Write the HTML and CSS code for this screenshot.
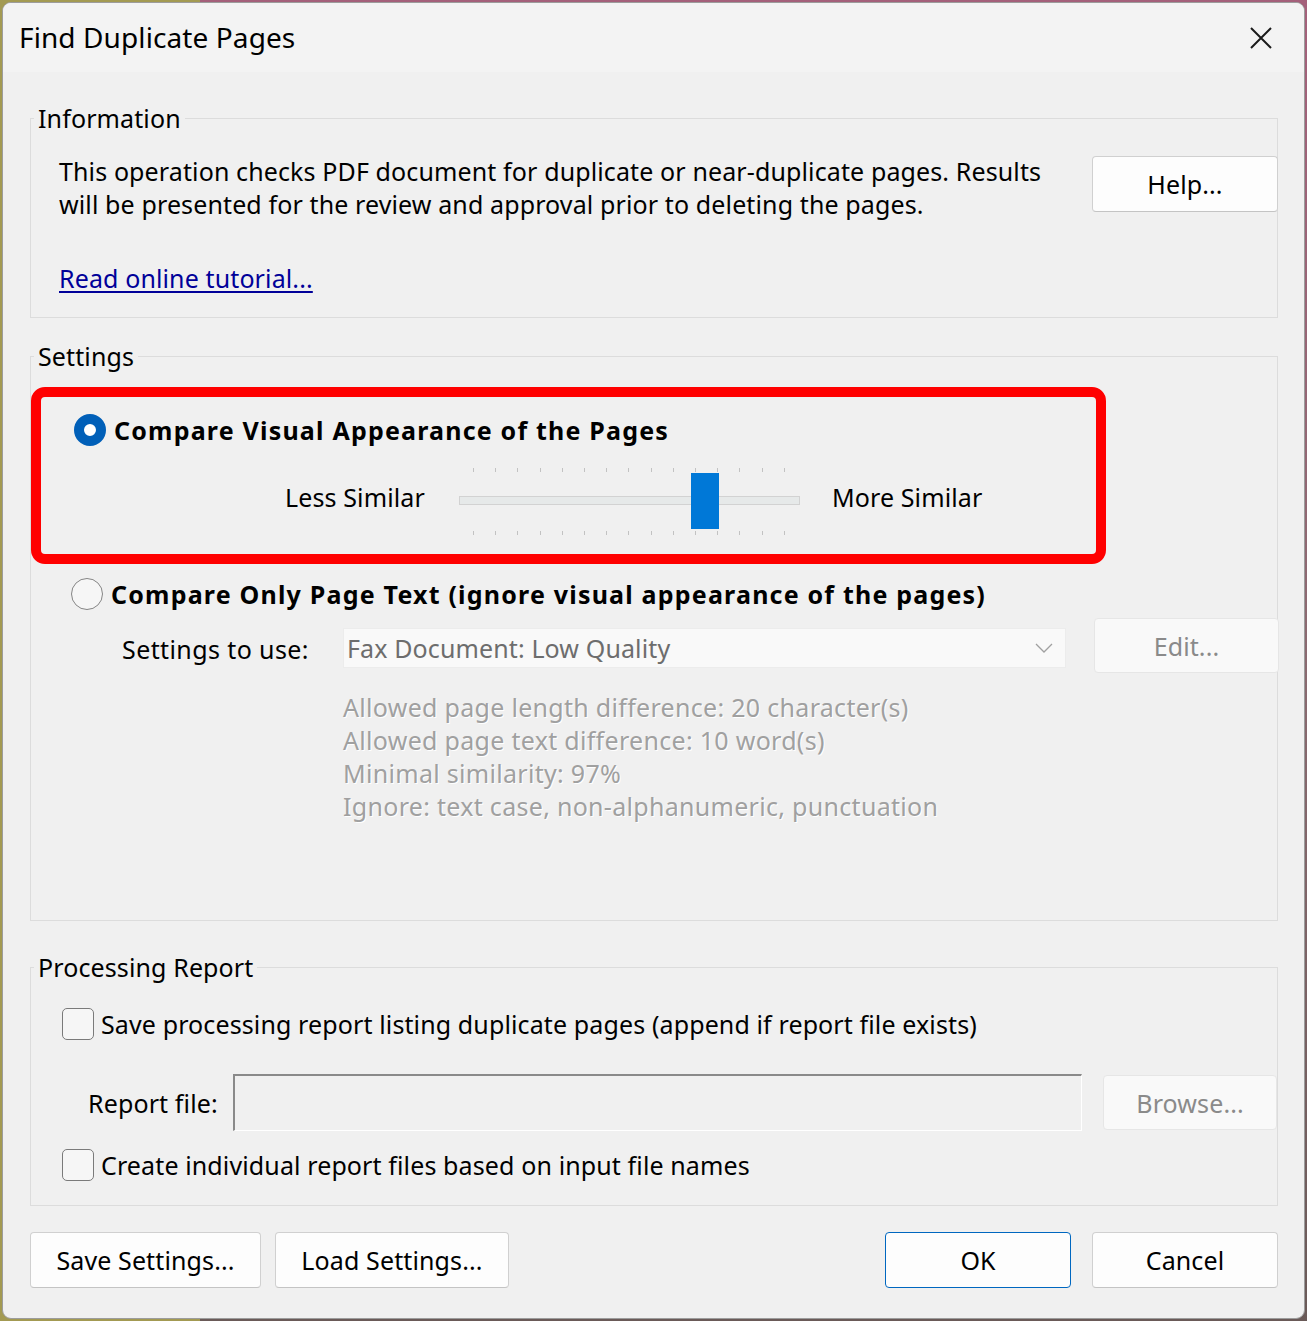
FILE: index.html
```html
<!DOCTYPE html>
<html>
<head>
<meta charset="utf-8">
<title>Find Duplicate Pages</title>
<link rel="stylesheet" href="styles.css">
</head>
<body>
<div class="window">
  <div class="titlebar">
    <span class="title">Find Duplicate Pages</span>
    <svg class="close" width="22" height="22" viewBox="0 0 22 22"><path d="M1 1 L21 21 M21 1 L1 21" stroke="#1a1a1a" stroke-width="2" fill="none"/></svg>
  </div>
  <div class="content">
    <fieldset class="group info">
      <legend>Information</legend>
      <div class="group-body info-body">
        <div class="info-row">
          <p class="info-text">This operation checks PDF document for duplicate or near-duplicate pages. Results will be presented for the review and approval prior to deleting the pages.</p>
          <div class="btn help">Help...</div>
        </div>
        <a class="link" href="#">Read online tutorial...</a>
      </div>
    </fieldset>

    <fieldset class="group settings">
      <legend>Settings</legend>
      <div class="group-body settings-body">
        <div class="highlight">
          <div class="radio-row">
            <span class="radio checked"></span>
            <span class="radio-label">Compare Visual Appearance of the Pages</span>
          </div>
          <div class="slider-row">
            <span class="slider-text">Less Similar</span>
            <div class="slider">
              <div class="ticks">
                <i></i><i></i><i></i><i></i><i></i><i></i><i></i><i></i><i></i><i></i><i></i><i></i><i></i><i></i><i></i>
              </div>
              <div class="track"></div>
              <div class="ticks bottom">
                <i></i><i></i><i></i><i></i><i></i><i></i><i></i><i></i><i></i><i></i><i></i><i></i><i></i><i></i><i></i>
              </div>
              <div class="thumb"></div>
            </div>
            <span class="slider-text more">More Similar</span>
          </div>
        </div>
        <div class="radio-row second">
          <span class="radio"></span>
          <span class="radio-label">Compare Only Page Text (ignore visual appearance of the pages)</span>
        </div>
        <div class="use-row">
          <span class="use-label">Settings to use:</span>
          <div class="select">
            <span>Fax Document: Low Quality</span>
            <svg width="18" height="10" viewBox="0 0 18 10"><path d="M1 1 L9 9 L17 1" stroke="#a0a0a0" stroke-width="1.3" fill="none"/></svg>
          </div>
          <div class="btn disabled edit">Edit...</div>
        </div>
        <div class="details">
          <div>Allowed page length difference: 20 character(s)</div>
          <div>Allowed page text difference: 10 word(s)</div>
          <div>Minimal similarity: 97%</div>
          <div>Ignore: text case, non-alphanumeric, punctuation</div>
        </div>
      </div>
    </fieldset>

    <fieldset class="group report">
      <legend>Processing Report</legend>
      <div class="group-body report-body">
        <div class="check-row">
          <span class="checkbox"></span>
          <span>Save processing report listing duplicate pages (append if report file exists)</span>
        </div>
        <div class="file-row">
          <span class="file-label">Report file:</span>
          <div class="file-input"></div>
          <div class="btn disabled browse">Browse...</div>
        </div>
        <div class="check-row second">
          <span class="checkbox"></span>
          <span>Create individual report files based on input file names</span>
        </div>
      </div>
    </fieldset>

    <div class="footer">
      <div class="btn save">Save Settings...</div>
      <div class="btn load">Load Settings...</div>
      <div class="spacer"></div>
      <div class="btn ok">OK</div>
      <div class="btn cancel">Cancel</div>
    </div>
  </div>
</div>
</body>
</html>
```

FILE: styles.css
```css
html, body {
  margin: 0;
  padding: 0;
}
body {
  width: 1307px;
  height: 1321px;
  background:
    linear-gradient(90deg, #a39a52 0, #a39a52 200px, transparent 200px),
    linear-gradient(180deg, #a4607a 0, #8a6a70 50%, #6a5a58 100%);
  font-family: "Noto Sans", "DejaVu Sans", sans-serif;
  font-size: 25px;
  letter-spacing: 0.12px;
  color: #000;
  overflow: hidden;
}
.window {
  box-sizing: border-box;
  width: 1303px;
  height: 1317px;
  margin: 2px 0 0 2px;
  border: 1px solid #9c9c9c;
  border-radius: 9px;
  background: #f0f0f0;
  overflow: hidden;
  display: flex;
  flex-direction: column;
}
.titlebar {
  height: 69px;
  background: #f3f3f3;
  display: flex;
  align-items: center;
  padding: 0 32px 0 16px;
  flex-shrink: 0;
}
.title {
  font-family: "Noto Sans", sans-serif;
  font-size: 28px;
  letter-spacing: 0.1px;
  flex: 1;
  padding-bottom: 2px;
}
.close {
  display: block;
}
.content {
  padding: 31px 26px 0 27px;
}
.group {
  margin: 0;
  padding: 0;
  border: 1px solid #dcdcdc;
  min-width: 0;
}
.group legend {
  padding: 0 4px;
  margin-left: 3px;
  line-height: 30px;
  font-size: 25px;
}
.info-body {
  padding: 22px 0 22px 28px;
}
.info-row {
  display: flex;
  align-items: flex-start;
}
.info-text {
  margin: 0;
  flex: 1;
  line-height: 33px;
}
.btn {
  box-sizing: border-box;
  background: #fdfdfd;
  border: 1px solid #d0d0d0;
  border-bottom-color: #c4c4c4;
  border-radius: 4px;
  display: flex;
  align-items: center;
  justify-content: center;
  font-size: 25px;
}
.help {
  width: 186px;
  height: 56px;
  margin: 1px -1px 0 40px;
}
.link {
  display: inline-block;
  margin-top: 41px;
  line-height: 33px;
  color: #000099;
  text-decoration: underline;
  text-underline-offset: 3px;
}
.settings {
  margin-top: 23px;
}
.settings-body {
  padding: 16px 0 97px 0;
}
.highlight {
  box-sizing: border-box;
  width: 1075px;
  height: 177px;
  border: 10px solid #ff0000;
  border-radius: 14px;
  padding: 17px 0 0 33px;
}
.radio-row {
  display: flex;
  align-items: center;
  height: 32px;
}
.radio {
  box-sizing: border-box;
  width: 32px;
  height: 32px;
  border-radius: 50%;
  border: 1.5px solid #858585;
  background: #f6f6f6;
  flex-shrink: 0;
}
.radio.checked {
  border: 10.5px solid #005fb8;
  background: #fff;
}
.radio-label {
  font-weight: bold;
  letter-spacing: 1.2px;
  margin-left: 8px;
}
.slider-row {
  display: flex;
  align-items: center;
  margin-top: 22px;
  padding-left: 211px;
}
.slider-text {
  margin-bottom: 10px;
}
.slider {
  position: relative;
  width: 341px;
  height: 67px;
  margin: 0 32px 0 34px;
  display: flex;
  flex-direction: column;
}
.ticks {
  display: flex;
  justify-content: space-between;
  padding: 0 15px 0 14px;
  height: 4px;
}
.ticks i {
  width: 1px;
  height: 4px;
  background: #c2c2c2;
}
.ticks.bottom {
  margin-top: 26px;
}
.track {
  box-sizing: border-box;
  margin-top: 24px;
  height: 9px;
  background: #e6e9e9;
  border: 1px solid #d2d2d2;
}
.thumb {
  position: absolute;
  left: 232px;
  top: 5px;
  width: 28px;
  height: 56px;
  background: #0078d7;
}
.radio-row.second {
  margin: 14px 0 0 40px;
}
.use-row {
  display: flex;
  align-items: flex-start;
  margin-top: 8px;
  padding-left: 91px;
  height: 54px;
}
.use-label {
  width: 221px;
  flex-shrink: 0;
  line-height: 33px;
  margin-top: 15px;
  letter-spacing: 0.4px;
}
.select {
  box-sizing: border-box;
  width: 723px;
  height: 40px;
  margin-top: 10px;
  background: #f9f9f9;
  border: 1px solid #ececec;
  display: flex;
  align-items: center;
  justify-content: space-between;
  padding: 0 12px 0 3px;
  color: #6d6d6d;
}
.edit {
  width: 185px;
  height: 55px;
  margin-left: 28px;
  margin-right: -3px;
}
.btn.disabled {
  background: #f9f9f9;
  border-color: #e6e6e6;
  color: #8a8a8a;
}
.details {
  margin-top: 19px;
  padding-left: 312px;
  line-height: 33px;
  color: #a0a0a0;
  letter-spacing: 0.3px;
  text-shadow: 1px 1px 0 #ffffff;
}
.report {
  margin-top: 31px;
}
.report-body {
  padding: 25px 0 24px 31px;
}
.check-row {
  display: flex;
  align-items: center;
  height: 33px;
}
.checkbox {
  box-sizing: border-box;
  width: 32px;
  height: 32px;
  border: 1.5px solid #7a7a7a;
  border-radius: 5px;
  background: #f6f6f6;
  margin-right: 7px;
  flex-shrink: 0;
}
.file-row {
  display: flex;
  align-items: center;
  margin-top: 34px;
  padding-left: 26px;
}
.file-label {
  width: 145px;
  flex-shrink: 0;
}
.file-input {
  box-sizing: border-box;
  width: 850px;
  height: 57px;
  border: 1px solid #ffffff;
  border-top: 2px solid #8a8a8a;
  border-left: 2px solid #8a8a8a;
  background: #f0f0f0;
}
.browse {
  width: 174px;
  height: 55px;
  margin-left: 21px;
}
.check-row.second {
  margin-top: 17px;
}
.footer {
  display: flex;
  margin-top: 26px;
}
.footer .btn {
  height: 56px;
}
.save {
  width: 231px;
}
.load {
  width: 234px;
  margin-left: 14px;
}
.spacer {
  flex: 1;
}
.ok {
  width: 186px;
  border-color: #0067c0 !important;
}
.cancel {
  width: 186px;
  margin-left: 21px;
}
```
